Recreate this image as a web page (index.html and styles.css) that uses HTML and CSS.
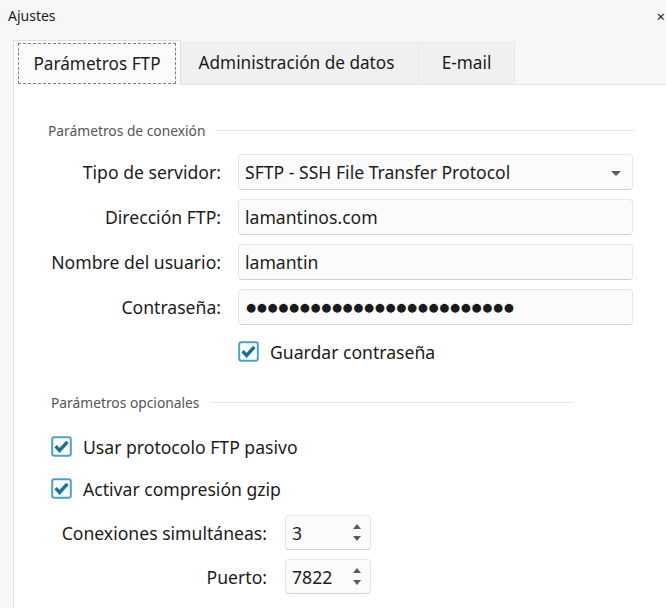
FILE: index.html
```html
<!DOCTYPE html>
<html lang="es">
<head>
    <meta charset="UTF-8">
    <meta name="viewport" content="width=device-width, initial-scale=1.0">
    <title>Ajustes</title>
    <link rel="stylesheet" href="styles.css">
</head>
<body>
    <div class="titlebar">
        <span>Ajustes</span>
        <span class="close">×</span>
    </div>

    <div class="tabs">
        <div class="tab active"><span class="focus">Parámetros FTP</span></div>
        <div class="tab tab-data">Administración de datos</div>
        <div class="tab tab-mail">E-mail</div>
        <div class="tab-rest"></div>
    </div>

    <div class="panel">
        <div class="group-title conn-title"><span>Parámetros de conexión</span><i></i></div>

        <div class="form-grid">
            <label>Tipo de servidor:</label>
            <div class="field select">SFTP - SSH File Transfer Protocol<span class="caret"></span></div>

            <label>Dirección FTP:</label>
            <div class="field">lamantinos.com</div>

            <label>Nombre del usuario:</label>
            <div class="field">lamantin</div>

            <label>Contraseña:</label>
            <div class="field password">●●●●●●●●●●●●●●●●●●●●●●●●●</div>

            <span></span>
            <div class="check save-pass">
                <svg width="21" height="21" viewBox="0 0 21 21"><rect x="1.2" y="1.2" width="18.6" height="18.6" rx="2" fill="#fff" stroke="#4aa3c4" stroke-width="2"/><path d="M4.6 10.2l4 4.2 7.8-8.6" fill="none" stroke="#16708f" stroke-width="3.4"/></svg>
                <span>Guardar contraseña</span>
            </div>
        </div>

        <div class="group-title opt-title"><span>Parámetros opcionales</span><i></i></div>

        <div class="check opt-check">
            <svg width="21" height="21" viewBox="0 0 21 21"><rect x="1.2" y="1.2" width="18.6" height="18.6" rx="2" fill="#fff" stroke="#4aa3c4" stroke-width="2"/><path d="M4.6 10.2l4 4.2 7.8-8.6" fill="none" stroke="#16708f" stroke-width="3.4"/></svg>
            <span>Usar protocolo FTP pasivo</span>
        </div>
        <div class="check opt-check second">
            <svg width="21" height="21" viewBox="0 0 21 21"><rect x="1.2" y="1.2" width="18.6" height="18.6" rx="2" fill="#fff" stroke="#4aa3c4" stroke-width="2"/><path d="M4.6 10.2l4 4.2 7.8-8.6" fill="none" stroke="#16708f" stroke-width="3.4"/></svg>
            <span>Activar compresión gzip</span>
        </div>

        <div class="spin-grid">
            <label>Conexiones simultáneas:</label>
            <div class="field spin">3<span class="arrows"><b class="up"></b><b class="down"></b></span></div>

            <label>Puerto:</label>
            <div class="field spin">7822<span class="arrows"><b class="up"></b><b class="down"></b></span></div>
        </div>
    </div>
</body>
</html>
```

FILE: styles.css
```css
html, body { height: 100%; }
body { margin: 0; background: #f7f7f7; font-family: "Noto Sans", sans-serif; color: #1b1b1b; overflow: hidden; display: flex; flex-direction: column; }

.titlebar { height: 31px; display: flex; justify-content: space-between; align-items: center; padding-left: 8px; font-size: 14px; }
.titlebar .close { font-size: 15px; margin-right: 1px; }

.tabs { display: flex; align-items: flex-end; margin-top: 9px; margin-left: 13px; height: 45px; font-size: 17.2px; }
.tab { height: 44px; display: flex; align-items: center; justify-content: center; background: #f0f0f0; border-right: 1px solid #e9e9e9; border-bottom: 1px solid #e2e2e2; box-sizing: border-box; }
.tab.active { height: 45px; width: 168px; background: #fbfbfb; border: 1px solid #dedede; border-bottom: none; padding: 2px 4px 1px; }
.tab.active .focus { flex: 1; align-self: stretch; display: flex; align-items: center; justify-content: center; border: 1px dashed #808080; }
.tab-data { width: 238px; padding-right: 6px; }
.tab-mail { width: 96px; }
.tab-rest { flex: 1; height: 44px; border-bottom: 1px solid #e2e2e2; box-sizing: border-box; }

.panel { flex: 1; background: #fff; margin-left: 13px; border-left: 1px solid #e4e4e4; }

.group-title { display: flex; align-items: center; gap: 11px; font-size: 13.8px; color: #555; height: 18px; }
.group-title i { flex: 1; border-top: 1px solid #e6e6e6; }
.conn-title { margin: 36px 32px 0 34px; }
.opt-title { margin: 31px 92px 0 37px; }

.form-grid { display: grid; grid-template-columns: 175px 395px; column-gap: 17px; row-gap: 9px; margin: 15px 0 0 32px; font-size: 17.6px; }
.form-grid label, .spin-grid label { text-align: right; align-self: center; }

.field { height: 36px; box-sizing: border-box; background: #fbfbfb; border: 1px solid #e6e6e6; border-bottom-color: #d2d2d2; border-radius: 4px; display: flex; align-items: center; padding: 0 6px; position: relative; }
.select .caret { position: absolute; right: 11px; top: 16px; border-left: 5px solid transparent; border-right: 5px solid transparent; border-top: 5px solid #5a5a5a; }
.password { font-family: "DejaVu Sans", sans-serif; font-size: 11.5px; letter-spacing: 0.7px; padding-left: 7px; }

.check { display: flex; align-items: center; gap: 11px; font-size: 17.6px; height: 21px; }
.save-pass { margin-top: 7px; }
.opt-check { margin: 25px 0 0 37px; }
.opt-check.second { margin-top: 21px; }

.spin-grid { display: grid; grid-template-columns: 216px 86px; column-gap: 18px; row-gap: 9px; margin: 16px 0 0 37px; font-size: 17.6px; }
.spin { height: 35px; }
.arrows { position: absolute; right: 9px; top: 8px; display: flex; flex-direction: column; gap: 7px; }
.arrows b { width: 0; height: 0; border-left: 4px solid transparent; border-right: 4px solid transparent; }
.arrows .up { border-bottom: 5px solid #5a5a5a; }
.arrows .down { border-top: 5px solid #5a5a5a; }
```
